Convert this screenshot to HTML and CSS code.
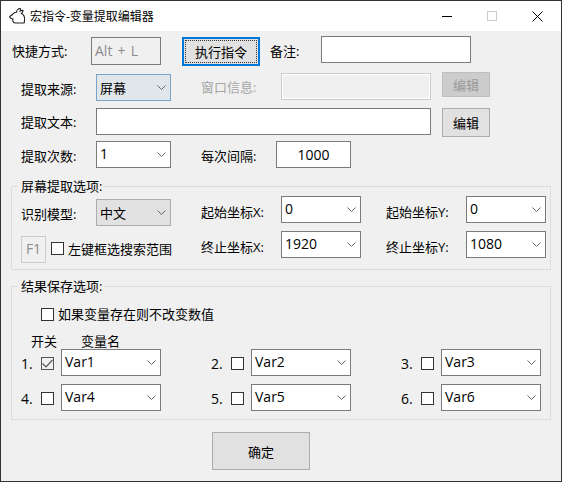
FILE: index.html
```html
<!DOCTYPE html>
<html lang="zh-CN">
<head>
  <meta charset="UTF-8">
  <title>宏指令-变量提取编辑器</title>
  <link rel="stylesheet" href="styles.css">
</head>
<body>
  <div class="ventana">
    <div class="barra">
      <svg class="logo" width="17" height="16" viewBox="0 0 17 16">
        <path d="M.8 8.5 L3.5 6.5 C4.5 5 6 4.3 7.5 4.3 C7.5 2.5 9 .6 11 .6 C11.8 .6 11.8 2 11.3 3 C12.8 2 14.5 2 14 3 C13.5 4 13 5 12.5 5.5 C14.5 6.5 15.6 8.5 15.6 11 C15.6 12.5 15.6 14 15 15 L6 15 C4 15 3.5 12.5 4 11 C2.5 11 .4 10 .8 8.5 Z" fill="#fff" stroke="#222" stroke-width="1.1"/>
      </svg>
      <span class="barra-titulo">宏指令-变量提取编辑器</span>
      <div class="barra-botones">
        <svg width="10" height="10" viewBox="0 0 10 10"><path d="M0 5.5H10" stroke="#000"/></svg>
        <svg class="max" width="10" height="10" viewBox="0 0 10 10"><rect x=".5" y=".5" width="9" height="9" fill="none" stroke="#ccc"/></svg>
        <svg width="11" height="11" viewBox="0 0 11 11"><path d="M.5 .5L10.5 10.5M10.5 .5L.5 10.5" stroke="#000"/></svg>
      </div>
    </div>

    <div class="contenido">
      <div class="fila fila-atajo">
        <label class="et et-atajo">快捷方式:</label>
        <div class="caja caja-atajo">Alt + L</div>
        <button class="btn btn-ejecutar"><span>执行指令</span></button>
        <label class="et et-nota">备注:</label>
        <input class="caja caja-nota" type="text">
      </div>

      <div class="fila fila-fuente">
        <label class="et et-izq">提取来源:</label>
        <div class="combo combo-foco">
          <span>屏幕</span>
          <svg class="flecha" width="9" height="5" viewBox="0 0 9 5"><path d="M.5 .5L4.5 4.5L8.5 .5" fill="none" stroke="#666"/></svg>
        </div>
        <label class="et et-ventana apagado">窗口信息:</label>
        <input class="caja caja-ventana" type="text" disabled>
        <button class="btn btn-editar btn-apagado">编辑</button>
      </div>

      <div class="fila fila-texto">
        <label class="et et-izq">提取文本:</label>
        <input class="caja caja-texto" type="text">
        <button class="btn btn-editar btn-alto">编辑</button>
      </div>

      <div class="fila fila-veces">
        <label class="et et-izq">提取次数:</label>
        <div class="combo">
          <span>1</span>
          <svg class="flecha" width="9" height="5" viewBox="0 0 9 5"><path d="M.5 .5L4.5 4.5L8.5 .5" fill="none" stroke="#666"/></svg>
        </div>
        <label class="et et-intervalo">每次间隔:</label>
        <input class="caja caja-intervalo" type="text" value="1000">
      </div>

      <fieldset class="grupo grupo-pantalla">
        <legend>屏幕提取选项:</legend>
        <div class="fila fila-inicio">
          <label class="et et-izq">识别模型:</label>
          <div class="combo combo-gris">
            <span>中文</span>
            <svg class="flecha" width="9" height="5" viewBox="0 0 9 5"><path d="M.5 .5L4.5 4.5L8.5 .5" fill="none" stroke="#666"/></svg>
          </div>
          <label class="et et-coord">起始坐标X:</label>
          <div class="combo combo-coord">
            <span>0</span>
            <svg class="flecha" width="9" height="5" viewBox="0 0 9 5"><path d="M.5 .5L4.5 4.5L8.5 .5" fill="none" stroke="#666"/></svg>
          </div>
          <label class="et et-coord-y">起始坐标Y:</label>
          <div class="combo combo-coord">
            <span>0</span>
            <svg class="flecha" width="9" height="5" viewBox="0 0 9 5"><path d="M.5 .5L4.5 4.5L8.5 .5" fill="none" stroke="#666"/></svg>
          </div>
        </div>
        <div class="fila fila-fin">
          <div class="tecla">F1</div>
          <span class="check check-tecla"></span>
          <label class="et et-rango">左键框选搜索范围</label>
          <label class="et et-coord">终止坐标X:</label>
          <div class="combo combo-coord">
            <span>1920</span>
            <svg class="flecha" width="9" height="5" viewBox="0 0 9 5"><path d="M.5 .5L4.5 4.5L8.5 .5" fill="none" stroke="#666"/></svg>
          </div>
          <label class="et et-coord-y">终止坐标Y:</label>
          <div class="combo combo-coord">
            <span>1080</span>
            <svg class="flecha" width="9" height="5" viewBox="0 0 9 5"><path d="M.5 .5L4.5 4.5L8.5 .5" fill="none" stroke="#666"/></svg>
          </div>
        </div>
      </fieldset>

      <fieldset class="grupo grupo-resultado">
        <legend>结果保存选项:</legend>
        <div class="fila fila-conservar">
          <span class="check"></span>
          <label class="et">如果变量存在则不改变数值</label>
        </div>
        <div class="cabecera">
          <span class="cab-switch">开关</span>
          <span>变量名</span>
        </div>
        <div class="vars">
          <div class="var">
            <span class="num">1.</span>
            <span class="check check-on">
              <svg width="11" height="9" viewBox="0 0 11 9"><path d="M.5 4.5L4 8L10.5 1" fill="none" stroke="#555" stroke-width="1.2"/></svg>
            </span>
            <div class="combo combo-var">
              <span>Var1</span>
              <svg class="flecha" width="9" height="5" viewBox="0 0 9 5"><path d="M.5 .5L4.5 4.5L8.5 .5" fill="none" stroke="#666"/></svg>
            </div>
          </div>
          <div class="var">
            <span class="num">2.</span>
            <span class="check"></span>
            <div class="combo combo-var">
              <span>Var2</span>
              <svg class="flecha" width="9" height="5" viewBox="0 0 9 5"><path d="M.5 .5L4.5 4.5L8.5 .5" fill="none" stroke="#666"/></svg>
            </div>
          </div>
          <div class="var">
            <span class="num">3.</span>
            <span class="check"></span>
            <div class="combo combo-var">
              <span>Var3</span>
              <svg class="flecha" width="9" height="5" viewBox="0 0 9 5"><path d="M.5 .5L4.5 4.5L8.5 .5" fill="none" stroke="#666"/></svg>
            </div>
          </div>
          <div class="var">
            <span class="num">4.</span>
            <span class="check"></span>
            <div class="combo combo-var">
              <span>Var4</span>
              <svg class="flecha" width="9" height="5" viewBox="0 0 9 5"><path d="M.5 .5L4.5 4.5L8.5 .5" fill="none" stroke="#666"/></svg>
            </div>
          </div>
          <div class="var">
            <span class="num">5.</span>
            <span class="check"></span>
            <div class="combo combo-var">
              <span>Var5</span>
              <svg class="flecha" width="9" height="5" viewBox="0 0 9 5"><path d="M.5 .5L4.5 4.5L8.5 .5" fill="none" stroke="#666"/></svg>
            </div>
          </div>
          <div class="var">
            <span class="num">6.</span>
            <span class="check"></span>
            <div class="combo combo-var">
              <span>Var6</span>
              <svg class="flecha" width="9" height="5" viewBox="0 0 9 5"><path d="M.5 .5L4.5 4.5L8.5 .5" fill="none" stroke="#666"/></svg>
            </div>
          </div>
        </div>
      </fieldset>

      <div class="pie">
        <button class="btn btn-ok">确定</button>
      </div>
    </div>
  </div>
</body>
</html>
```

FILE: styles.css
```css
* {
  box-sizing: border-box;
}

html, body {
  margin: 0;
  padding: 0;
}

body {
  font-family: "Open Sans", "Noto Sans CJK SC", sans-serif;
  font-size: 13px;
  color: #000;
}

.ventana {
  width: 562px;
  height: 482px;
  border: 1px solid #333;
  background-color: #f0f0f0;
  overflow: hidden;
}

.barra {
  display: flex;
  align-items: center;
  height: 30px;
  background-color: #fff;
  padding-left: 8px;
}

.logo {
  flex: none;
}

.barra-titulo {
  margin-left: 4px;
  font-size: 12px;
}

.barra-botones {
  margin-left: auto;
  display: flex;
  align-items: center;
  padding-right: 18px;
}

.barra-botones .max {
  margin: 0 35px;
}

.fila {
  display: flex;
  align-items: flex-start;
}

.et {
  display: block;
  line-height: 20px;
  white-space: nowrap;
}

.apagado {
  color: #a6a6a6;
}

.caja {
  display: block;
  height: 27px;
  border: 1px solid #7a7a7a;
  background-color: #fff;
  font: inherit;
  font-size: 14px;
  padding: 0 4px;
  outline: none;
}

.combo {
  flex: none;
  display: flex;
  align-items: center;
  justify-content: space-between;
  width: 75px;
  height: 27px;
  border: 1px solid #7a7a7a;
  background-color: #fff;
  font-size: 14px;
  padding: 0 4px 3px 3px;
}

.flecha {
  flex: none;
  margin-top: 3px;
}

.combo-foco {
  background-color: #e1e6ea;
  border-color: #7ba2c7;
  font-size: 13px;
  margin-top: 2px;
  padding-bottom: 1px;
}

.combo-gris {
  background-color: #e1e1e1;
  border-color: #adadad;
  font-size: 13px;
  margin-top: 3px;
  padding-bottom: 1px;
}

.combo-foco .flecha,
.combo-gris .flecha {
  margin-top: 1px;
}

.combo-coord {
  width: 80px;
}

.combo-var {
  width: 100px;
}

.btn {
  display: block;
  flex: none;
  border: 1px solid #adadad;
  background-color: #e1e1e1;
  font: inherit;
  color: #000;
  padding: 0;
}

/* fila 1 */
.fila-atajo {
  margin-top: 5px;
}

.et-atajo {
  width: 79px;
  margin: 5px 0 0 11px;
}

.caja-atajo {
  width: 70px;
  height: 28px;
  margin-top: 1px;
  background-color: #f0f0f0;
  color: #8c8c8c;
  line-height: 25px;
  word-spacing: 1.5px;
  padding: 0 0 0 3px;
}

.btn-ejecutar {
  width: 78px;
  height: 29px;
  margin: 1px 0 0 21px;
  border: 2px solid #0078d7;
  padding: 1px;
}

.btn-ejecutar span {
  display: block;
  height: 100%;
  line-height: 22px;
  border: 1px dotted #333;
}

.et-nota {
  width: 51px;
  margin: 5px 0 0 10px;
}

.caja-nota {
  width: 150px;
}

/* fila 2 */
.fila-fuente {
  margin-top: 6px;
}

.et-izq {
  width: 75px;
  margin: 7px 0 0 20px;
}

.et-ventana {
  width: 80px;
  margin: 5px 0 0 30px;
}

.caja-ventana {
  width: 150px;
  margin-top: 1px;
  background-color: #f0f0f0;
  border: 1px solid #ccc;
  box-shadow: inset 0 0 0 1px #fff;
}

.btn-editar {
  width: 48px;
  height: 25px;
  margin-left: 11px;
}

.btn-apagado {
  background-color: #ccc;
  border-color: #bfbfbf;
  color: #999;
}

/* fila 3 */
.fila-texto {
  margin-top: 7px;
}

.fila-texto .et-izq {
  margin-top: 4px;
}

.caja-texto {
  width: 335px;
}

.btn-alto {
  height: 29px;
}

/* fila 4 */
.fila-veces {
  margin-top: 4px;
}

.fila-veces .et-izq {
  margin-top: 5px;
}

.et-intervalo {
  width: 75px;
  margin: 5px 0 0 30px;
}

.caja-intervalo {
  width: 75px;
  text-align: center;
}

/* grupos */
.grupo {
  width: 540px;
  margin: 0 0 0 10px;
  padding: 0;
  border: 1px solid #dcdcdc;
  min-width: 0;
}

.grupo legend {
  margin-left: 6px;
  padding: 0 2px 0 3px;
  line-height: 20px;
}

.grupo-pantalla {
  margin-top: 8px;
  height: 94px;
}

.grupo-resultado {
  margin-top: 6px;
  height: 144px;
}

.grupo .et-izq {
  margin: 8px 0 0 9px;
}

.et-coord {
  width: 80px;
  margin: 6px 0 0 30px;
}

.et-coord-y {
  width: 80px;
  margin: 6px 0 0 25px;
}

.fila-fin {
  margin-top: 5px;
}

.tecla {
  flex: none;
  width: 25px;
  height: 27px;
  margin: 5px 0 0 9px;
  border: 1px solid #ccc;
  color: #8c8c8c;
  font-size: 14px;
  text-align: center;
  line-height: 24px;
}

.check {
  flex: none;
  display: flex;
  align-items: center;
  justify-content: center;
  width: 13px;
  height: 13px;
  border: 1px solid #333;
  background-color: #fff;
}

.check-tecla {
  margin: 11px 0 0 5px;
}

.check-on {
  border-color: #555;
  background-color: #f0f0f0;
}

.et-rango {
  width: 103px;
  margin: 8px 0 0 4px;
}

.fila-conservar {
  margin: 11px 0 0 29px;
}

.fila-conservar .check {
  margin-top: 1px;
}

.fila-conservar .et {
  margin: -3px 0 0 4px;
}

.cabecera {
  display: flex;
  margin: 7px 0 0 19px;
  line-height: 20px;
}

.cab-switch {
  width: 50px;
}

.vars {
  display: grid;
  grid-template-columns: repeat(3, 190px);
  row-gap: 8px;
  margin: -2px 0 0 9px;
}

.var {
  display: flex;
  align-items: flex-start;
}

.num {
  width: 20px;
  margin-top: 5px;
  font-size: 14px;
  line-height: 20px;
}

.var .check {
  margin-top: 8px;
}

.combo-var {
  margin-left: 7px;
}

.pie {
  display: flex;
  margin: 12px 0 0 211px;
}

.btn-ok {
  width: 98px;
  height: 38px;
}
```
